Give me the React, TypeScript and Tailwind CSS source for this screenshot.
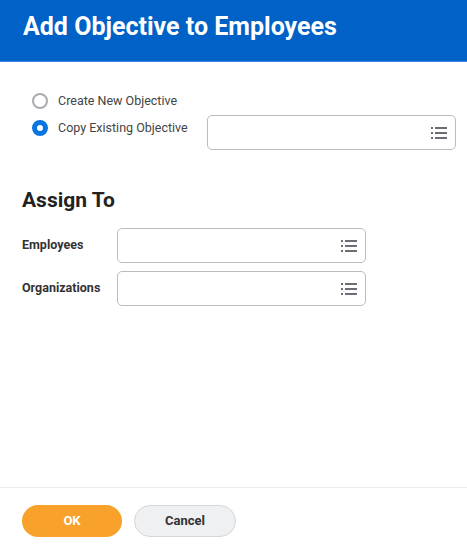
import React from 'react';

const ListIcon = () => (
  <svg width="16" height="12" viewBox="0 0 16 12" className="text-[#6b6f75]">
    <rect x="0" y="0" width="2" height="2" fill="currentColor" />
    <rect x="4" y="0" width="12" height="2" fill="currentColor" />
    <rect x="0" y="5" width="2" height="2" fill="currentColor" />
    <rect x="4" y="5" width="12" height="2" fill="currentColor" />
    <rect x="0" y="10" width="2" height="2" fill="currentColor" />
    <rect x="4" y="10" width="12" height="2" fill="currentColor" />
  </svg>
);

const Prompt: React.FC<{ className?: string }> = ({ className = '' }) => (
  <div className={`h-[35px] w-[249px] shrink-0 rounded-[5px] border border-[#b9bcc1] bg-white flex items-center justify-end pr-[8px] ${className}`}>
    <ListIcon />
  </div>
);

export default function App() {
  return (
    <div className="w-[467px] h-[545px] bg-white flex flex-col font-['Roboto',sans-serif] text-[#333]">
      {/* Header */}
      <div className="h-[62px] bg-[#0061c7] border-b border-[#3d8be0] flex items-start pl-[23px] pt-[8px]">
        <h1 className="text-[25px] font-bold text-white whitespace-nowrap">Add Objective to Employees</h1>
      </div>

      {/* Body */}
      <div className="flex-1 px-[22px]">
        <div className="flex items-start mt-[31px] pl-[10px]">
          <div className="w-[175px] shrink-0 flex flex-col gap-[11px]">
            <label className="flex items-center gap-[10px] h-[16px]">
              <span className="w-[16px] h-[16px] shrink-0 rounded-full border-2 border-[#a8acb1] bg-white" />
              <span className="text-[12.5px] text-[#444] whitespace-nowrap">Create New Objective</span>
            </label>
            <label className="flex items-center gap-[10px] h-[16px]">
              <span className="w-[16px] h-[16px] shrink-0 rounded-full border-[5px] border-[#0875e1] bg-white" />
              <span className="text-[12.5px] text-[#444] whitespace-nowrap">Copy Existing Objective</span>
            </label>
          </div>
          <Prompt className="mt-[22px]" />
        </div>

        <h2 className="text-[21px] leading-[28px] font-bold text-[#222] mt-[36px]">Assign To</h2>

        <div className="mt-[14px] flex flex-col gap-[8px]">
          <div className="flex items-center">
            <span className="w-[95px] text-[12.5px] font-bold text-[#333]">Employees</span>
            <Prompt />
          </div>
          <div className="flex items-center">
            <span className="w-[95px] text-[12.5px] font-bold text-[#333]">Organizations</span>
            <Prompt />
          </div>
        </div>
      </div>

      {/* Footer */}
      <div className="h-[58px] border-t border-[#ececec] flex items-start pt-[17px] pl-[22px] gap-[12px]">
        <button className="w-[100px] h-[32px] rounded-full bg-[#f8a12b] text-white text-[13px] font-bold">OK</button>
        <button className="w-[102px] h-[32px] rounded-full bg-[#eef0f2] border border-[#d4d8dc] text-[#333] text-[13px] font-bold">Cancel</button>
      </div>
    </div>
  );
}
